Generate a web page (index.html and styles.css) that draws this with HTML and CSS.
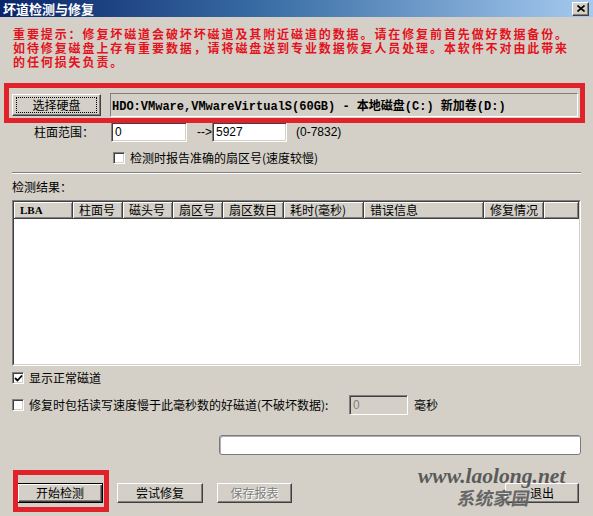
FILE: index.html
```html
<!DOCTYPE html>
<html>
<head>
<meta charset="utf-8">
<title>坏道检测与修复</title>
<link rel="stylesheet" href="styles.css">
</head>
<body>
<div class="window">
  <div class="titlebar">
    <span class="title">坏道检测与修复</span>
    <span class="close"><svg width="8" height="7" viewBox="0 0 8 7"><path d="M0.5 0.5 L7.5 6.5 M7.5 0.5 L0.5 6.5" stroke="#000" stroke-width="1.6" fill="none"/></svg></span>
  </div>
  <div class="content">
    <div class="warning">
      <div class="wline">重要提示：修复坏磁道会破坏坏磁道及其附近磁道的数据。请在修复前首先做好数据备份。</div>
      <div class="wline">如待修复磁盘上存有重要数据，请将磁盘送到专业数据恢复人员处理。本软件不对由此带来</div>
      <div class="wline">的任何损失负责。</div>
    </div>

    <div class="disk-row">
      <div class="btn btn-select"><span class="focus">选择硬盘</span></div>
      <div class="disk-field">HDO:VMware,VMwareVirtualS(60GB) - 本地磁盘(C:) 新加卷(D:)</div>
    </div>

    <div class="range-row">
      <span class="range-label">柱面范围：</span>
      <div class="edit edit-from">0</div>
      <span class="arrow">--&gt;</span>
      <div class="edit edit-to">5927</div>
      <span class="hint">(0-7832)</span>
    </div>

    <div class="check check-exact"><span class="box"></span><span>检测时报告准确的扇区号(速度较慢)</span></div>

    <div class="sep"></div>

    <div class="section">检测结果：</div>

    <div class="list">
      <div class="list-inner">
        <div class="header">
          <div class="col c1 lba">LBA</div>
          <div class="col c2">柱面号</div>
          <div class="col c3">磁头号</div>
          <div class="col c4">扇区号</div>
          <div class="col c5">扇区数目</div>
          <div class="col c6">耗时(毫秒)</div>
          <div class="col c7">错误信息</div>
          <div class="col c8">修复情况</div>
          <div class="col c9"></div>
        </div>
      </div>
    </div>

    <div class="check check-normal"><span class="box"><svg width="9" height="9" viewBox="0 0 9 9"><path d="M1 4 L3.5 6.5 L8 1.5" stroke="#000" stroke-width="1.8" fill="none"/></svg></span><span>显示正常磁道</span></div>

    <div class="slow-row">
      <div class="check check-slow"><span class="box"></span><span>修复时包括读写速度慢于此毫秒数的好磁道(不破坏数据):</span></div>
      <div class="edit edit-disabled">0</div>
      <span class="unit">毫秒</span>
    </div>

    <div class="progress"></div>

    <div class="buttons">
      <div class="btn btn-default b-start">开始检测</div>
      <div class="btn b-try">尝试修复</div>
      <div class="btn b-save disabled">保存报表</div>
      <div class="btn b-exit">退出</div>
    </div>
  </div>

  <div class="mark mark-disk"></div>
  <div class="mark mark-start"></div>
  <div class="watermark">
    <div class="wm-url">www.laolong.net</div>
    <div class="wm-name">系统家园</div>
  </div>
</div>
</body>
</html>
```
FILE: styles.css
```css
* { box-sizing: border-box; }
body {
  margin: 0;
  background: #d4d0c8;
  font-family: "Noto Sans CJK SC", "Liberation Sans", sans-serif;
  font-size: 12px;
  color: #000;
}
.window {
  position: relative;
  width: 593px;
  height: 516px;
  overflow: hidden;
  background: #d4d0c8;
}
.titlebar {
  height: 17px;
  background: linear-gradient(to right, #0a246a 0%, #3a6ea5 45%, #a6caf0 100%);
  display: flex;
  align-items: center;
  justify-content: space-between;
  padding: 0 4px 0 3px;
}
.title {
  color: #fff;
  font-weight: bold;
  font-size: 13px;
  line-height: 17px;
}
.close {
  width: 17px;
  height: 14px;
  background: #d4d0c8;
  border: 1px solid;
  border-color: #fff #404040 #404040 #fff;
  box-shadow: inset -1px -1px #808080;
  display: flex;
  align-items: center;
  justify-content: center;
}
.content {
  padding: 0 12px;
}
.warning {
  margin: 10px 0 0 1px;
  color: #e4121c;
  font-weight: bold;
  font-size: 12px;
  letter-spacing: 1.9px;
  white-space: nowrap;
}
.wline {
  height: 14px;
  line-height: 14px;
  font-size: 12px;
}
.disk-row {
  margin-top: 24px;
  height: 24px;
  display: flex;
  align-items: center;
  gap: 9px;
}
.btn {
  height: 20px;
  background: #d4d0c8;
  border: 1px solid;
  border-color: #fff #404040 #404040 #fff;
  box-shadow: inset -1px -1px #808080;
  display: flex;
  align-items: center;
  justify-content: center;
  font-size: 12px;
  line-height: 14px;
}
.btn-select {
  width: 89px;
  height: 22px;
}
.focus {
  width: 81px;
  height: 16px;
  border: 1px dotted #000;
  display: flex;
  align-items: center;
  justify-content: center;
}
.disk-field {
  width: 468px;
  height: 24px;
  border: 1px solid;
  border-color: #808080 #fff #fff #808080;
  padding-left: 1px;
  display: flex;
  align-items: center;
  font-family: "Liberation Mono", "Noto Sans CJK SC", monospace;
  font-weight: bold;
  font-size: 12px;
  white-space: nowrap;
}
.range-row {
  margin-top: 5px;
  height: 20px;
  display: flex;
  align-items: center;
}
.range-label {
  width: 82px;
  text-align: right;
  line-height: 14px;
}
.edit {
  height: 20px;
  background: #fff;
  border: 1px solid;
  border-color: #808080 #fff #fff #808080;
  box-shadow: inset 1px 1px #404040, inset -1px -1px #d4d0c8;
  padding-left: 3px;
  display: flex;
  align-items: center;
  font-family: "Liberation Sans", sans-serif;
  font-size: 12px;
}
.edit-from { margin-left: 17px; width: 76px; }
.arrow {
  width: 25px;
  padding-left: 10px;
  font-family: "Liberation Sans", sans-serif;
  white-space: nowrap;
}
.edit-to { width: 75px; }
.hint {
  margin-left: 9px;
  font-family: "Liberation Sans", sans-serif;
  font-size: 12px;
}
.check {
  display: flex;
  align-items: center;
  gap: 5px;
  height: 14px;
  line-height: 14px;
  white-space: nowrap;
}
.box {
  width: 12px;
  height: 12px;
  flex: none;
  background: #fff;
  border: 1px solid;
  border-color: #808080 #fff #fff #808080;
  box-shadow: inset 1px 1px #404040, inset -1px -1px #d4d0c8;
  display: flex;
  align-items: center;
  justify-content: center;
}
.check-exact {
  margin: 9px 0 0 101px;
}
.sep {
  margin-top: 7px;
  height: 2px;
  border-top: 1px solid #808080;
  border-bottom: 1px solid #fff;
}
.section {
  margin-top: 6px;
  height: 14px;
  line-height: 14px;
}
.list {
  margin-top: 6px;
  width: 569px;
  height: 166px;
  border: 1px solid;
  border-color: #808080 #fff #fff #808080;
}
.list-inner {
  height: 100%;
  background: #fff;
  border: 1px solid;
  border-color: #404040 #d4d0c8 #d4d0c8 #404040;
}
.header {
  display: flex;
  height: 17px;
}
.col {
  height: 17px;
  background: #d4d0c8;
  border-right: 1px solid #404040;
  border-bottom: 1px solid #404040;
  box-shadow: inset 1px 1px #fff, inset -1px -1px #808080;
  padding-left: 6px;
  display: flex;
  align-items: center;
  line-height: 14px;
  white-space: nowrap;
}
.lba {
  font-family: "Liberation Serif", serif;
  font-weight: bold;
  font-size: 11px;
}
.c1 { width: 59px; }
.c2 { width: 50px; }
.c3 { width: 50px; }
.c4 { width: 50px; }
.c5 { width: 61px; }
.c6 { width: 80px; }
.c7 { width: 120px; }
.c8 { width: 60px; }
.c9 { flex: 1; }
.check-normal {
  margin-top: 5px;
}
.slow-row {
  margin-top: 10px;
  height: 20px;
  display: flex;
  align-items: center;
}
.check-slow {
  width: 337px;
}
.edit-disabled {
  width: 59px;
  background: #d4d0c8;
  color: #808080;
}
.unit {
  margin-left: 6px;
  line-height: 14px;
}
.progress {
  margin: 20px 0 0 207px;
  width: 362px;
  height: 20px;
  background: #fff;
  border: 1px solid #7a7a7a;
  border-radius: 3px;
  box-shadow: inset 1px 1px #b0b0b0;
}
.buttons {
  margin-top: 28px;
  display: flex;
  align-items: center;
}
.b-start { margin-left: 5px; width: 86px; }
.btn-default {
  border-color: #000;
  box-shadow: inset 1px 1px #fff, inset -1px -1px #404040, inset -2px -2px #808080;
}
.b-try { margin-left: 14px; width: 86px; }
.b-save { margin-left: 14px; width: 75px; }
.disabled {
  color: #808080;
  text-shadow: 1px 1px #fff;
}
.b-exit { margin-left: 213px; width: 74px; }
.mark {
  position: absolute;
  border: 5px solid #e2222a;
}
.mark-disk {
  left: 4px;
  top: 83px;
  width: 581px;
  height: 40px;
}
.mark-start {
  left: 13px;
  top: 470px;
  width: 96px;
  height: 42px;
}
.watermark {
  position: absolute;
  left: 418px;
  top: 465px;
  width: 160px;
}
.wm-url {
  font-family: "Liberation Serif", serif;
  font-style: italic;
  font-weight: bold;
  font-size: 21.5px;
  line-height: 22px;
  color: #5a5a5a;
  white-space: nowrap;
}
.wm-name {
  margin: 0 0 0 40px;
  font-family: "Noto Sans CJK SC", sans-serif;
  font-weight: bold;
  font-size: 18px;
  line-height: 20px;
  color: #666;
  transform: skewX(-10deg);
  white-space: nowrap;
}
```
